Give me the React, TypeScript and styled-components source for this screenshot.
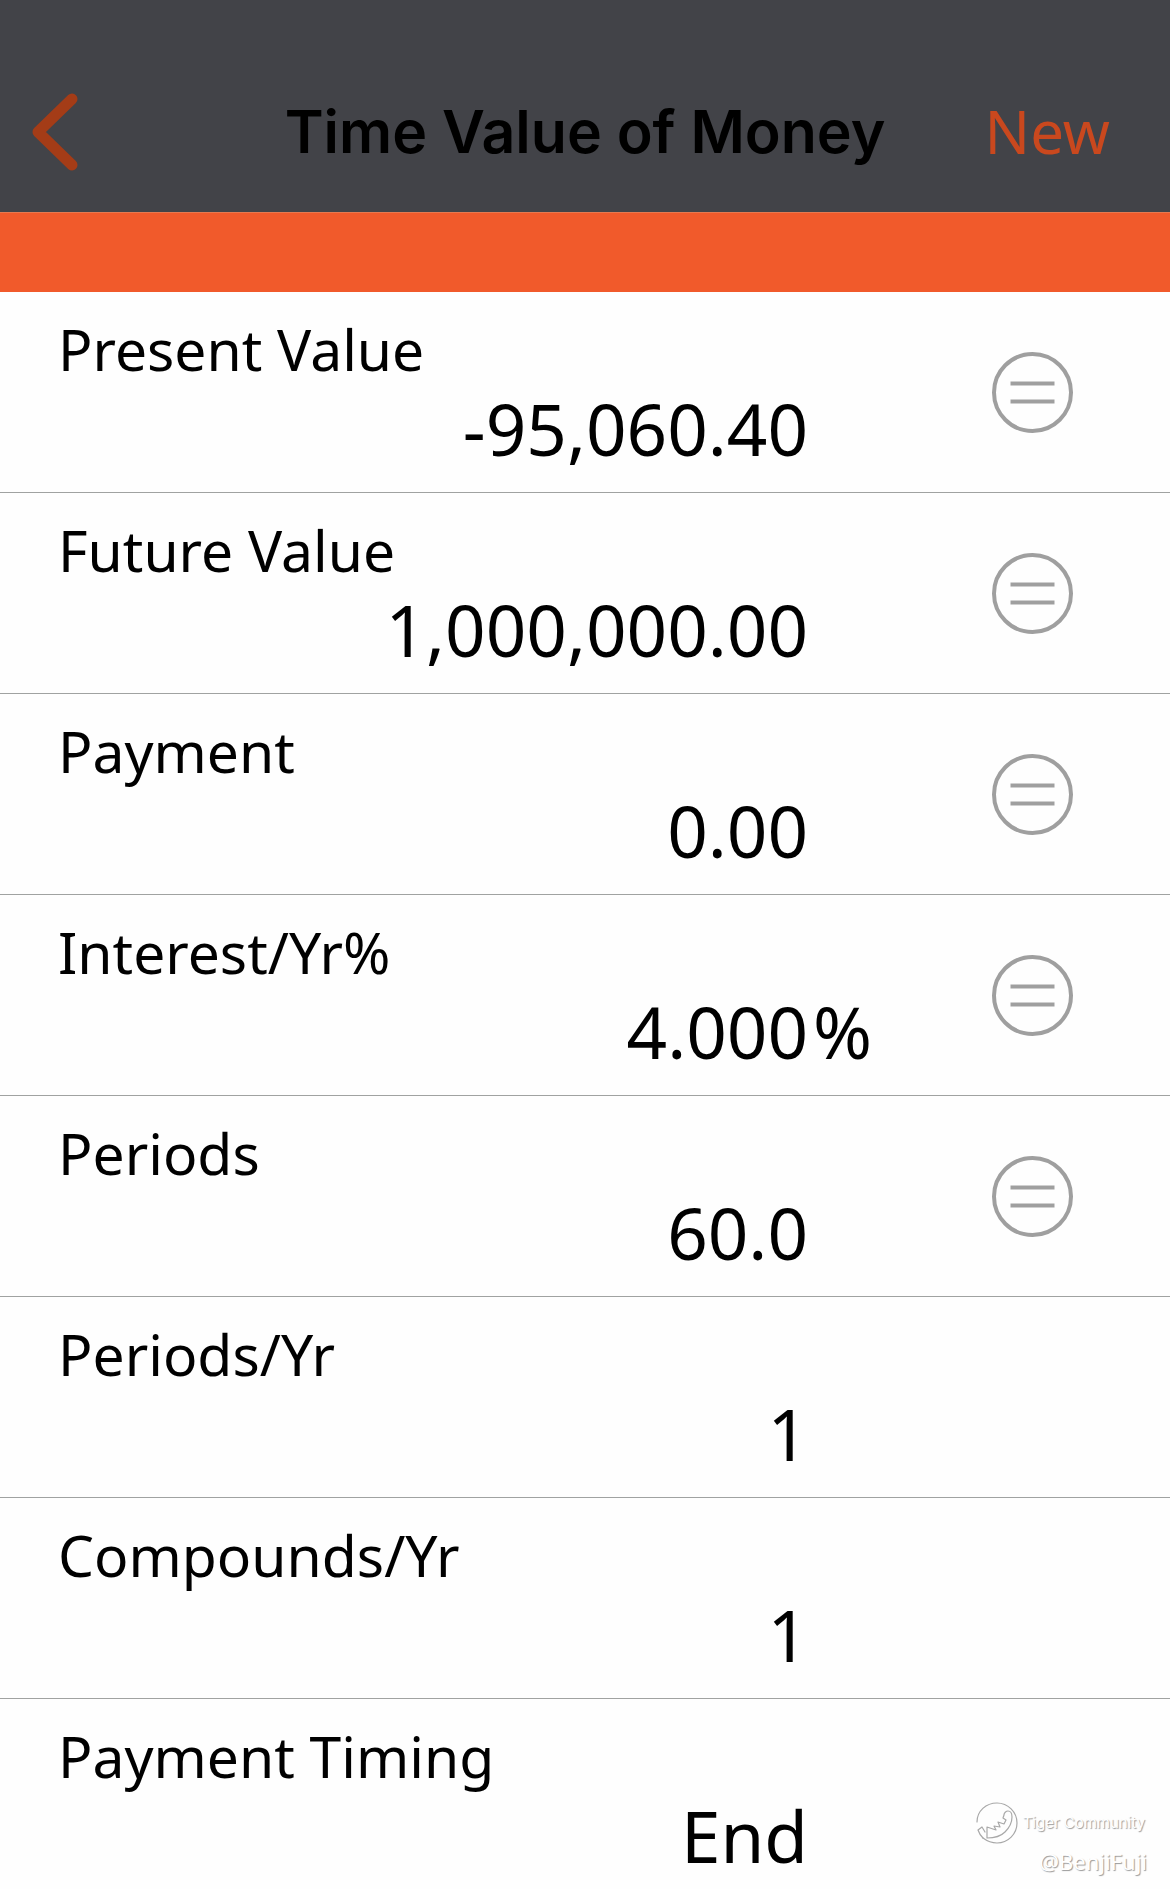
import React from "react";
import styled, { createGlobalStyle } from "styled-components";

const GlobalStyle = createGlobalStyle`
  *, *::before, *::after { box-sizing: border-box; }
  body { margin: 0; background: #fefefe; color: #000; font-family: "Noto Sans", "Open Sans", sans-serif; }
`;

const Page = styled.div`
  position: relative;
  overflow: hidden;
`;

const Header = styled.header`
  display: grid;
  grid-template-columns: 180px 1fr 180px;
  align-items: center;
  padding: 84px 32px 32px;
  background: #424348;
`;

const Title = styled.h1`
  margin: 0;
  text-align: center;
  font-family: Inter, "Liberation Sans", sans-serif;
  font-size: 59px;
  font-weight: 600;
  line-height: 96px;
  white-space: nowrap;
`;

const BackButton = styled.button`
  display: flex;
  justify-self: start;
  padding: 0;
  border: 0;
  background: none;
  color: #a43c17;
`;

const NewButton = styled.button`
  justify-self: end;
  padding: 0 28px 0 0;
  border: 0;
  background: none;
  color: #c9481e;
  font-family: inherit;
  font-size: 60px;
  line-height: 94px;
  align-self: start;
`;

const Band = styled.div`
  height: 80px;
  background: #f15a2b;
  border-top: 1px solid #e8794f;
`;

const Field = styled.div`
  display: flex;
  flex-direction: column;
  min-width: 0;
  padding: 17px 0 23px;
`;

const Row = styled.div`
  display: grid;
  grid-template-columns: 1fr 168px 194px;
  align-items: center;
  padding-left: 58px;
  border-bottom: 1px solid #a0a2a1;

  &:last-child { border-bottom: 0; }
  &:last-child ${Field} { padding-bottom: 13px; }
`;

const Label = styled.label`
  font-size: 57px;
  line-height: 80px;
`;

const valueText = `
  display: block;
  width: 100%;
  height: 80px;
  padding: 0;
  border: 0;
  outline: 0;
  background: none;
  color: #000;
  font-family: inherit;
  font-size: 71px;
  line-height: 80px;
`;

const ValueInput = styled.input`
  ${valueText}
  text-align: right;
`;

const ValueSelect = styled.select`
  ${valueText}
  appearance: none;
  text-align: right;
  text-align-last: right;
`;

const Suffix = styled.span`
  align-self: end;
  padding: 0 0 23px 5px;
  font-size: 71px;
  line-height: 80px;
`;

const SolveButton = styled.button`
  display: flex;
  grid-column: 3;
  justify-self: start;
  margin-left: 16px;
  padding: 0;
  border: 0;
  background: none;
  color: #9f9f9f;
`;

const Watermark = styled.div`
  position: absolute;
  right: 23px;
  bottom: 11px;
  display: flex;
  flex-direction: column;
  align-items: flex-end;
  color: #fff;
  text-shadow: 1px 1px 1px #999;
`;

const Brand = styled.div`
  display: flex;
  align-items: center;
  gap: 5px;
  padding-right: 2px;
  font-family: Inter, "Liberation Sans", sans-serif;
  font-size: 15px;
  line-height: 24px;
`;

const Handle = styled.div`
  font-size: 22px;
  line-height: 34px;
`;

type Entry = {
  id: string;
  label: string;
  value: string;
  suffix?: string;
  solvable?: boolean;
  options?: string[];
};

const entries: Entry[] = [
  { id: "pv", label: "Present Value", value: "-95,060.40", solvable: true },
  { id: "fv", label: "Future Value", value: "1,000,000.00", solvable: true },
  { id: "pmt", label: "Payment", value: "0.00", solvable: true },
  { id: "rate", label: "Interest/Yr%", value: "4.000", suffix: "%", solvable: true },
  { id: "periods", label: "Periods", value: "60.0", solvable: true },
  { id: "periods-yr", label: "Periods/Yr", value: "1" },
  { id: "compounds-yr", label: "Compounds/Yr", value: "1" },
  { id: "timing", label: "Payment Timing", value: "End", options: ["End", "Begin"] },
];

const ChevronLeft = () => (
  <svg width="46" height="80" viewBox="0 0 46 80" fill="none" stroke="currentColor" strokeWidth="11" strokeLinecap="round" strokeLinejoin="round" aria-hidden="true">
    <path d="M40 7 6 40l34 33" />
  </svg>
);

const EqualsCircle = () => (
  <svg width="81" height="81" viewBox="0 0 81 81" fill="none" stroke="currentColor" strokeWidth="4" aria-hidden="true">
    <circle cx="40.5" cy="40.5" r="38.5" />
    <path d="M18.5 31.5h44M18.5 49.5h44" />
  </svg>
);

const TigerLogo = () => (
  <svg width="42" height="42" viewBox="0 0 42 42" fill="none" stroke="#a8a8a8" strokeWidth="1.2" strokeLinecap="round" strokeLinejoin="round" aria-hidden="true">
    <path d="M1 20C1 9 10 1 21 1s20 9 20 20-9 20-20 20c-5 0-10-2-14-5" />
    <path d="M7 36c-2-2-4-5-5-8l4-3 3 5" />
    <path d="M11 25v11c8 0 14-2 18-6 5-5 7-10 7-15 0-4-2-6-4-6s-4 2-4 4l-1 3 3 2-2 4-6-2 2 5-6-1 2 4-9-3Z" />
  </svg>
);

export default function App() {
  return (
    <Page>
      <GlobalStyle />
      <Header>
        <BackButton aria-label="Back"><ChevronLeft /></BackButton>
        <Title>Time Value of Money</Title>
        <NewButton>New</NewButton>
      </Header>
      <Band />
      <main>
        {entries.map((entry) => (
          <Row key={entry.id}>
            <Field>
              <Label htmlFor={entry.id}>{entry.label}</Label>
              {entry.options ? (
                <ValueSelect id={entry.id} defaultValue={entry.value}>
                  {entry.options.map((option) => <option key={option}>{option}</option>)}
                </ValueSelect>
              ) : (
                <ValueInput id={entry.id} defaultValue={entry.value} inputMode="decimal" />
              )}
            </Field>
            {entry.suffix && <Suffix>{entry.suffix}</Suffix>}
            {entry.solvable && (
              <SolveButton aria-label={`Solve for ${entry.label}`}><EqualsCircle /></SolveButton>
            )}
          </Row>
        ))}
      </main>
      <Watermark>
        <Brand><TigerLogo />Tiger Community</Brand>
        <Handle>@BenjiFuji</Handle>
      </Watermark>
    </Page>
  );
}
